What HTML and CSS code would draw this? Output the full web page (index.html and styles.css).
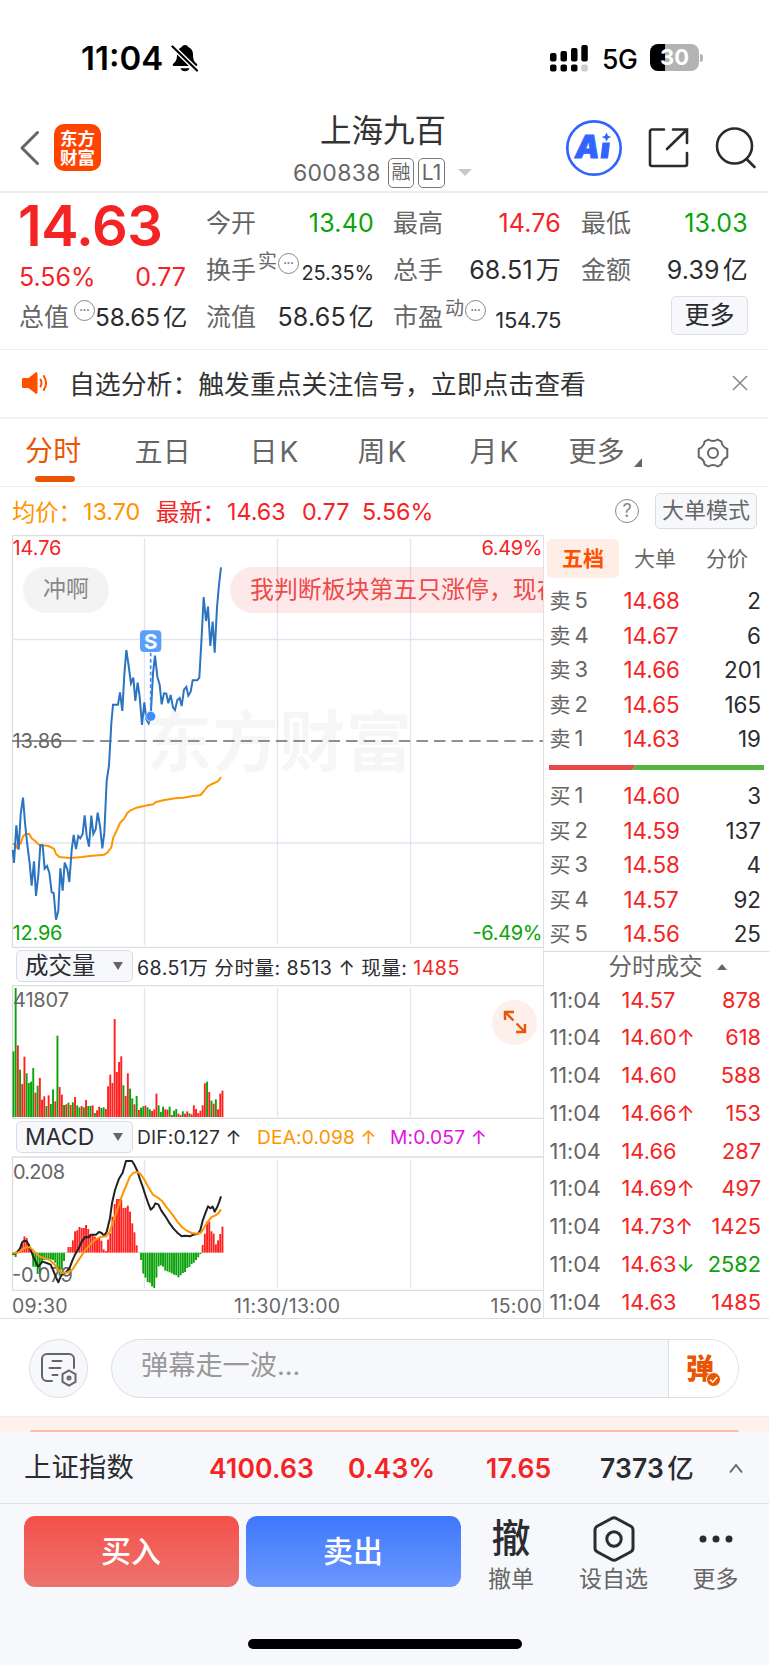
FILE: index.html
```html
<!DOCTYPE html>
<html lang="zh-CN">
<head>
<meta charset="utf-8">
<title>上海九百 600838</title>
<link rel="stylesheet" href="styles.css">
</head>
<body>
<div class="app">
  <div class="status">
    <span class="clock">11:04</span>
    <svg class="bell" width="28" height="28" viewBox="0 0 28 28"><path d="M14 1c-2 0-3 1-3.200 2C7.500 4.200 6 7 6 10.500c0 5-1 7-4 9.500-.6 1-.3 2 1 2h22c1.300 0 1.600-1 1-2-3-2.500-4-4.500-4-9.500C22 7 20.500 4.200 17.200 3 17 2 16 1 14 1z"/><path d="M9.500 24.200h9c-.5 2-2.300 3-4.500 3s-4-1-4.500-3z"/><path class="slash-gap" d="M1.500 2.500L26 26.500"/><path class="slash" d="M1.500 2.500L26 26.500"/></svg>
    <svg class="signal" width="40" height="28" viewBox="0 0 40 28"><rect x="1" y="9" width="6.500" height="8.500" rx="2"/><rect x="11.500" y="7" width="6.500" height="10.500" rx="2"/><rect x="22" y="4" width="6.500" height="13.500" rx="2"/><rect x="32.300" y="1" width="6.500" height="16.500" rx="2"/><rect x="1" y="20.500" width="6.500" height="7" rx="2"/><rect x="11.500" y="20.500" width="6.500" height="7" rx="2"/><rect x="22" y="20.500" width="6.500" height="7" rx="2"/><rect class="dim" x="32.300" y="20.500" width="6.500" height="7" rx="2"/></svg>
    <span class="net">5G</span>
    <span class="battery">30</span><i class="nub"></i>
  </div>

  <header class="header">
    <svg class="back" width="22" height="36" viewBox="0 0 22 36"><path d="M18.500 2.500L3 18l15.500 15.500"/></svg>
    <div class="logo"><span>东方</span><span>财富</span></div>
    <div class="title">
      <h1>上海九百</h1>
      <div class="code"><span class="num">600838</span><span class="tag">融</span><span class="tag l1">L1</span><i class="caret"></i></div>
    </div>
    <svg class="ai" width="58" height="58" viewBox="0 0 58 58"><circle cx="29" cy="29" r="26.700"/><text x="10" y="39">A</text><path d="M37.500 23.500h7.500l-2 16h-7.500z"/><path d="M41.500 13.500l1.500 3.200 3.200 1.300-3.200 1.400-1.500 3.200-1.500-3.200-3.200-1.400 3.200-1.300z"/></svg>
    <svg class="share" width="42" height="42" viewBox="0 0 42 42"><path d="M16 2.500H4a2 2 0 0 0-2 2V37a2 2 0 0 0 2 2h33a2 2 0 0 0 2-2V26M25 2.500h14V16M39 2.500L19 22"/></svg>
    <svg class="search" width="42" height="42" viewBox="0 0 42 42"><circle cx="19.500" cy="19" r="17.500"/><path d="M31.500 32l8 8"/></svg>
  </header>

  <section class="quote">
    <div class="qcol main">
      <div class="price">14.63</div>
      <div class="chg"><span>5.56%</span><span>0.77</span></div>
      <div class="cell r3"><label>总值</label><i class="dots">•••</i><b class="s25">58.65<em>亿</em></b></div>
    </div>
    <div class="qcol c2">
      <div class="cell"><label>今开</label><b class="down">13.40</b></div>
      <div class="cell"><label>换手</label><sup>实</sup><i class="dots">•••</i><b class="s21">25.35%</b></div>
      <div class="cell"><label>流值</label><b>58.65<em>亿</em></b></div>
    </div>
    <div class="qcol c3">
      <div class="cell"><label>最高</label><b class="up">14.76</b></div>
      <div class="cell"><label>总手</label><b>68.51<em>万</em></b></div>
      <div class="cell"><label>市盈</label><sup>动</sup><i class="dots">•••</i><b class="s22">154.75</b></div>
    </div>
    <div class="qcol c4">
      <div class="cell"><label>最低</label><b class="down">13.03</b></div>
      <div class="cell"><label>金额</label><b>9.39<em>亿</em></b></div>
      <div class="cell"><button class="more">更多</button></div>
    </div>
  </section>

  <section class="notice">
    <svg width="28" height="24" viewBox="0 0 28 24"><path class="f" d="M2.500 7h5L14.500 1.500c1-.7 2 0 2 1v19c0 1-1 1.700-2 1L7.500 17h-5C1.500 17 1 16.500 1 15.500v-7C1 7.500 1.500 7 2.500 7z"/><path class="s" d="M19.500 8.500q2 3.500 0 7M22.800 5q4.500 7 0 14"/></svg>
    <p>自选分析：触发重点关注信号，立即点击查看</p>
    <svg class="close" width="16" height="16" viewBox="0 0 16 16"><path d="M1 1l14 14M15 1L1 15"/></svg>
  </section>

  <nav class="tabs">
    <span class="on">分时</span><span>五日</span><span class="k">日K</span><span class="k">周K</span><span class="k">月K</span><span class="tmore">更多<i></i></span>
    <svg width="32" height="30" viewBox="0 0 32 30"><path d="M11.300 1.500Q16 4.500 20.700 1.500L24.500 3.700Q24.800 8.300 30.300 11V19Q24.800 21.700 24.500 26.300L20.700 28.500Q16 25.500 11.300 28.500L7.500 26.300Q7.200 21.700 1.700 19V11Q7.200 8.300 7.500 3.700Z"/><circle cx="16" cy="15" r="5"/></svg>
  </nav>

  <section class="legend">
    <span class="avg">均价：</span><span class="avg v1">13.70</span><span class="up">最新：</span><span class="up v2">14.63</span><span class="up v3">0.77</span><span class="up v4">5.56%</span>
    <span class="q">?</span><span class="mode">大单模式</span>
  </section>

  <main class="board">
    <div class="charts">
      <div class="pricewrap">
        <svg class="chart" width="544" height="413" viewBox="0 535 544 413">
          <g class="grid"><path d="M12.500 947.500V535.500H544M12.500 947.500H544"/><path class="b" d="M144.500 538V945M277.500 538V945M410.500 538V945M12 639.500H544M12 843H544"/></g>
          <text class="wm" x="146" y="766" textLength="266">东方财富</text>
          <path class="dash0" d="M12 741H65"/><path class="dash" d="M65 741H543"/>
          <text class="ax g" x="12.500" y="748" textLength="50">13.86</text>
          <text class="ax r" x="12.500" y="554.500" textLength="49">14.76</text>
          <text class="ax n" x="12.500" y="940" textLength="50">12.96</text>
          <text class="ax r e" x="542.500" y="554.500" textLength="61">6.49%</text>
          <text class="ax n e" x="542.500" y="940" textLength="70">-6.49%</text>
          <g transform="translate(0 530) scale(.33333)">
            <path class="lavg" d="M38 942L46 941 52 955 57 943 62 941 69 919 77 912 88 912 95 925 106 934 117 944 145 948 162 956 168 972 178 981 210 984 245 981 270 978 313 974 322 968 334 952 340 922 350 902 360 879 373 865 382 849 392 841 410 833 435 827 460 823 468 816 490 811 525 805 550 803 575 799 602 795 612 783 623 769 636 762 652 755 658 749 663 741"/>
            <path class="lprice" d="M38 960L42 999 49 886 56 959 62 853 69 803 75 878 82 945 89 1000 95 1067 102 994 108 1098 115 1035 121 946 128 946 134 1016 141 1008 148 1028 155 1087 161 1089 168 1169 175 1142 181 1015 188 1082 194 998 202 1018 208 1056 215 960 221 915 228 957 235 918 241 925 248 912 254 856 260 917 267 950 274 857 280 912 287 898 293 848 300 888 307 955 313 908 320 753 327 706 334 580 339 524 354 524 360 487 367 543 373 433 379 360 386 408 393 460 400 443 406 513 413 458 419 500 426 585 433 517 439 568 446 580 452 562 459 430 465 377 472 440 479 464 485 523 492 490 499 491 505 520 512 495 519 532 525 540 532 510 539 504 545 528 552 479 559 471 565 497 572 485 578 451 592 451 598 443 605 320 611 201 618 273 624 230 631 348 638 275 644 368 651 232 657 165 663 112"/>
            <path class="mk" d="M452 368V548"/><circle cx="452" cy="559" r="15"/><rect x="420" y="301" width="64" height="65" rx="12"/><text class="s" x="452" y="357">S</text>
          </g>
        </svg>
        <div class="bullet b1">冲啊</div>
        <div class="bclip"><div class="bullet b2">我判断板块第五只涨停，现在</div></div>
      </div>
      <div class="info i1"><span class="sel">成交量<i></i></span><span class="t1">68.51万 分时量: 8513 ↑ 现量: <b>1485</b></span></div>
      <div class="volwrap">
        <svg class="chart" width="544" height="134" viewBox="0 985 544 134">
          <g class="grid"><path d="M12.500 1118V985.500H544M12 1118.500H544"/><path class="b" d="M144.500 988V1117M277.500 988V1117M410.500 988V1117"/></g>
          <g id="vol" transform="translate(0 940) scale(.33333)"></g>
          <text class="ax g" x="13" y="1007" textLength="56">41807</text>
        </svg>
        <div class="expand"><svg width="24" height="24" viewBox="0 0 24 24"><path d="M2 10V2h9M2.500 2.500l8 8M22 14v8h-9M21.500 21.500l-8-8"/></svg></div>
      </div>
      <div class="info i2"><span class="sel">MACD<i></i></span><span class="dif">DIF:0.127 ↑</span><span class="dea">DEA:0.098 ↑</span><span class="mm">M:0.057 ↑</span></div>
      <svg class="chart" width="544" height="135" viewBox="0 1156 544 135">
        <g class="grid"><path d="M12.500 1290V1157H544M12 1290.500H544"/><path class="b" d="M144.500 1160V1288M277.500 1160V1288M410.500 1160V1288"/></g>
        <g id="macd" transform="translate(0 1120) scale(.33333)"></g>
        <text class="ax g" x="13" y="1178.500" textLength="52">0.208</text>
        <text class="ax g" x="12" y="1282" textLength="61">-0.079</text>
        <g transform="translate(0 1120) scale(.33333)">
          <path class="lblack" d="M38 403L52 396 60 386 66 368 72 362 80 364 86 374 94 394 100 411 107 425 114 440 121 433 127 425 140 429 152 434 160 452 168 472 175 487 182 470 188 461 196 458 208 446 217 422 224 406 236 385 246 363 256 351 266 352 272 344 288 344 297 336 305 339 312 347 320 336 330 294 336 250 345 210 357 176 368 158 378 123 396 123 404 136 412 153 420 178 428 200 436 225 444 248 452 269 460 262 466 250 475 253 484 272 496 289 507 307 520 325 532 338 545 349 555 347 570 349 580 344 594 341 601 330 608 302 616 280 624 259 631 265 638 260 644 275 652 260 658 245 663 229"/>
          <path class="lavg" d="M38 400L56 397 66 389 76 382 90 382 100 392 120 410 150 420 164 434 176 452 188 459 205 457 217 449 233 424 250 399 265 379 283 361 300 351 318 349 328 337 340 303 352 268 365 230 378 198 390 169 401 158 410 156 420 160 432 177 445 201 458 223 475 234 487 244 500 262 517 283 532 305 546 321 560 332 575 339 592 341 603 338 614 320 626 302 635 291 645 287 655 280 663 268"/>
        </g>
      </svg>
      <div class="times"><span>09:30</span><span>11:30/13:00</span><span>15:00</span></div>
    </div>
    <aside class="depth">
      <div class="dtabs"><span class="on">五档</span><span>大单</span><span>分价</span></div>
      <div id="asks" class="levels"></div>
      <svg class="ratio" width="215" height="5" viewBox="0 0 215 5"><path fill="#e84848" d="M0 0H87l-4 5H0z"/><path fill="#55b53e" d="M87 0H215V5H83z"/></svg>
      <div id="bids" class="levels"></div>
      <div class="ttl">分时成交<i></i></div>
      <div id="trades"></div>
    </aside>
  </main>

  <section class="comment">
    <div class="round"><svg width="38" height="36" viewBox="0 0 38 36"><path d="M12 29H7a5 5 0 0 1-5-5V7a5 5 0 0 1 5-5h22a5 5 0 0 1 5 5v9M12.500 9h9M9.500 16h11M12.500 23h5"/><path d="M29 18.500l6.500 3.700v7.600L29 33.500l-6.500-3.700v-7.600z"/><circle cx="29" cy="26" r="1.500"/></svg></div>
    <div class="field"><span>弹幕走一波...</span><div class="dan"><b>弹</b><svg width="15" height="15" viewBox="0 0 15 15"><circle cx="7.500" cy="7.500" r="7"/><path d="M4 7.500l2.700 2.700 4.500-5"/></svg></div></div>
  </section>
  <div class="peach"><i></i></div>

  <footer class="foot">
    <div class="index"><span class="nm">上证指数</span><span class="up x1">4100.63</span><span class="up x2">0.43%</span><span class="up x3">17.65</span><span class="x4">7373<em>亿</em></span><svg width="16" height="12" viewBox="0 0 16 12"><path d="M2 10.500L8 3l6 7.500"/></svg></div>
    <div class="actions">
      <button class="buy">买入</button><button class="sell">卖出</button>
      <div class="act a1"><b>撤</b><span>撤单</span></div>
      <div class="act a2"><svg width="44" height="46" viewBox="0 0 44 46"><path d="M19.500 2.500q2.500-1.400 5 0L38.500 10q2.500 1.300 2.500 4v18q0 2.700-2.500 4L24.500 43.500q-2.500 1.400-5 0L5.500 36Q3 34.700 3 32V14q0-2.700 2.500-4z"/><circle cx="22" cy="23" r="7.200"/></svg><span>设自选</span></div>
      <div class="act a3"><svg width="36" height="46" viewBox="0 0 36 46"><circle cx="5" cy="23" r="3.500"/><circle cx="18" cy="23" r="3.500"/><circle cx="31" cy="23" r="3.500"/></svg><span>更多</span></div>
    </div>
    <div class="home"></div>
  </footer>
</div>
<script src="script.js"></script>
</body>
</html>
```
FILE: styles.css
```css
* { box-sizing: border-box; }
body { margin: 0; background: #fff; font-family: Inter, "Noto Sans CJK SC", sans-serif; color: #2b2c30; }
svg { display: block; flex: none; fill: none; }
em, i { font-style: normal; }
button { font-family: inherit; border: 0; padding: 0; }
.app { width: 769px; height: 1665px; overflow: hidden; display: flex; flex-direction: column; }
.app > * { flex: none; }
.up { color: #f52424; }
.down { color: #0ba30b; }

.status { height: 100px; padding: 15px 0 0 81px; display: flex; align-items: center; color: #000; }
.clock { width: 90px; font-size: 33px; font-weight: 600; letter-spacing: 0; }
.bell { fill: #000; }
.slash-gap { stroke: #fff; stroke-width: 5; }
.slash { stroke: #000; stroke-width: 2.200; stroke-linecap: round; }
.signal { margin-left: 350px; fill: #000; }
.signal .dim { fill: #ccc; }
.net { width: 49px; padding-left: 13px; font-size: 26.500px; font-weight: 500; letter-spacing: -.5px; line-height: 28px; padding-top: 3px; }
.battery { margin-left: 12px; width: 49px; height: 27px; border-radius: 8px; background: linear-gradient(90deg, #000 15px, #b3b3b3 15px); color: #fff; font-size: 22px; font-weight: 700; text-align: center; line-height: 27px; }
.nub { width: 3px; height: 8px; margin-left: 1px; background: #b3b3b3; border-radius: 0 3px 3px 0; }

.header { height: 93px; border-bottom: 2px solid #ececec; display: flex; align-items: flex-start; }
.back { margin: 30px 0 0 19px; stroke: #666; stroke-width: 3; stroke-linecap: round; stroke-linejoin: round; }
.logo { width: 47px; height: 47px; margin: 24px 0 0 13px; background: #ff4400; border-radius: 10px; color: #fff; display: flex; flex-direction: column; align-items: center; justify-content: center; font-size: 17.500px; font-weight: 700; line-height: 19px; }
.title { width: 190px; margin: 8px 0 0 191px; display: flex; flex-direction: column; }
.title h1 { margin: 0 0 0 28px; font-size: 31.500px; font-weight: 400; line-height: 46px; color: #333; }
.code { display: flex; align-items: center; height: 37px; margin-left: 1px; color: #666; }
.code .num { width: 95px; font-size: 23px; letter-spacing: .3px; white-space: nowrap; }
.tag { width: 26px; height: 30px; border: 1.500px solid #777; border-radius: 5px; font-size: 19px; line-height: 27px; text-align: center; margin-right: 4px; }
.tag.l1 { width: 27px; font-size: 21px; }
.caret { margin-left: 9px; border: 7px solid transparent; border-top: 7px solid #c8c8c8; border-bottom: 0; }
.ai { margin: 19px 0 0 83px; }
.ai circle { stroke: #3264ff; stroke-width: 2.700; }
.ai path, .ai text { fill: #3264ff; }
.ai text { font: italic 900 31px Inter, sans-serif; stroke: #3264ff; stroke-width: .8; }
.share { margin: 27px 0 0 25px; stroke: #2b2b2b; stroke-width: 2.600; stroke-linecap: round; }
.search { margin: 27px 0 0 25px; stroke: #2b2b2b; stroke-width: 2.600; stroke-linecap: round; }

.quote { height: 157px; border-bottom: 1px solid #efefef; display: grid; grid-template-columns: 167px 168px 167px 167px; column-gap: 20px; padding-left: 19px; }
.qcol { padding-top: 6px; }
.qcol.c3 { margin-left: -1px; margin-right: 0; }
.price { height: 55px; margin-left: -1px; font-size: 56px; font-weight: 600; line-height: 55px; color: #f52424; letter-spacing: -.5px; }
.chg { height: 39px; display: flex; justify-content: space-between; color: #f52424; font-size: 25px; line-height: 42px; padding-top: 2px; }
.cell { height: 47px; display: flex; align-items: center; color: #666; font-size: 25px; white-space: nowrap; line-height: 46px; padding-top: 1px; }
.cell b { font-weight: 400; margin-left: auto; color: #2b2c30; font-size: 25px; letter-spacing: .2px; }
.cell b em { margin-left: 3px; }
.cell b.up { color: #f52424; }
.cell b.down { color: #0ba30b; }
.cell .s25 { font-size: 24.300px; letter-spacing: -.1px; }
.cell .s21 { font-size: 20px; padding-top: 5px; letter-spacing: -.1px; }
.cell .s22 { font-size: 22px; padding-top: 5px; letter-spacing: -.3px; }
.cell sup { font-size: 19px; line-height: 20px; margin: -17px 0 0 2px; }
.dots { width: 21px; height: 21px; border: 1.500px solid #888; border-radius: 50%; font-size: 6px; line-height: 18px; text-align: center; margin: -13px 0 0 1px; flex: none; }
.r3 .dots { margin-left: 5px; }
.r3 b { margin-left: 0; }
.cell.r3 { justify-content: space-between; }
.more { width: 79px; height: 39px; margin: -3px 0 0 90px; background: #f7f8fb; border: 1.500px solid #dddfe6; border-radius: 5px; font-size: 25px; line-height: 35px; color: #2b2c30; }

.notice { height: 69px; border-bottom: 2px solid #f3f3f4; display: flex; align-items: center; padding: 0 0 2px 21px; }
.notice .f { fill: #ff5000; }
.notice .s { stroke: #ff5000; stroke-width: 2; stroke-linecap: round; }
.notice p { margin: 0 0 0 20px; width: 663px; font-size: 25.850px; color: #333; white-space: nowrap; }
.notice .close { margin: 1px 0 0; stroke: #888; stroke-width: 1.500; }

.tabs { height: 68px; border-bottom: 1.500px solid #ececee; display: grid; grid-template-columns: 109.500px 115px 108px 112px 99px 128px 32px; padding-left: 25px; align-items: center; color: #666; font-size: 28px; line-height: 65px; }
.tabs { letter-spacing: .3px; }
.tabs .k { letter-spacing: 2px; }
.tabs .on { color: #ea5504; height: 67px; display: flex; flex-direction: column; }
.tabs .on::after { content: ""; width: 40px; height: 6px; border-radius: 3px; background: #ea5504; margin: -8px 0 0 10px; }
.tabs svg { stroke: #666; stroke-width: 2; stroke-linejoin: round; }
.tmore i { display: inline-block; margin-left: 9px; border-left: 8px solid transparent; border-bottom: 9px solid #666; margin-bottom: -5px; }

.legend { height: 48px; display: flex; align-items: center; padding: 0 0 0 12px; font-size: 23.300px; color: #f52424; white-space: nowrap; }
.legend .avg { color: #ff9500; }
.legend span:nth-child(1), .legend span:nth-child(3) { width: 71px; }
.legend .v1 { width: 73px; } .legend .v2 { width: 75px; } .legend .v3 { width: 60px; } .legend .v4 { width: 72px; }
.legend .q { width: 24px; height: 24px; margin-left: 181px; border: 1.500px solid #888; border-radius: 50%; color: #888; font-size: 18px; line-height: 22px; text-align: center; }
.mode { width: 102px; height: 36px; margin-left: 16px; background: #f7f8fb; border: 1.500px solid #d9dbe6; border-radius: 5px; color: #666; font-size: 22px; line-height: 32px; text-align: center; }

.board { height: 784px; border-bottom: 1.500px solid #dfe0e4; display: grid; grid-template-columns: 544px 225px; grid-template-rows: 783px; }
.charts { border-right: 1.500px solid #dfe0e4; width: 544px; }
.grid path { stroke: #dcdde3; stroke-width: 1.300; }
.grid .b { stroke: #e2e5ef; }
.pricewrap, .volwrap { position: relative; }
.wm { font-size: 66px; font-weight: 700; fill: #000; fill-opacity: .035; }
.dash, .dash0 { stroke: #6b6b6b; stroke-width: 1.500; }
.dash { stroke-dasharray: 11.500 6.070; }
.ax { font-size: 20px; }
.ax.g { fill: #666; } .ax.r { fill: #f52424; } .ax.n { fill: #0ba30b; }
.ax.e { text-anchor: end; }
.lavg { stroke: #ff9500; stroke-width: 6; stroke-linejoin: round; }
.lprice { stroke: #2c74c0; stroke-width: 6; }
.lblack { stroke: #222; stroke-width: 6; stroke-linejoin: round; }
.mk { stroke: #3d8bff; stroke-width: 5; stroke-dasharray: 11 8; }
.pricewrap circle { fill: #3d8bff; stroke: #fff; stroke-width: 2; }
.pricewrap rect { fill: #5a9ffb; }
.pricewrap .s { font-size: 62px; font-weight: 700; fill: #fff; text-anchor: middle; }
.bullet { position: absolute; height: 46px; border-radius: 23px; line-height: 45px; white-space: nowrap; }
.b1 { left: 23px; top: 32px; width: 86px; background: #f3f3f3; color: #888; font-size: 23px; text-align: center; }
.bclip { position: absolute; left: 230px; top: 32px; width: 313px; height: 46px; overflow: hidden; }
.b2 { left: 0; top: 0; width: 350px; padding-left: 20px; font-size: 23.900px; background: rgba(240, 70, 70, .12); color: #ee4a4a; }
.info { display: flex; align-items: center; padding: 0 0 1px 16px; font-size: 19.200px; white-space: nowrap; }
.i1 { height: 37px; } .i2 { height: 37px; }
.sel { width: 117px; height: 32px; margin-right: 4px; flex: none; background: #f7f8fb; border: 1.500px solid #d9dbe6; border-radius: 5px; padding: 0 9px 0 8px; display: flex; align-items: center; justify-content: space-between; font-size: 23.500px; line-height: 28px; }
.i2 .sel { font-size: 23px; }
.sel i { border: 5px solid transparent; border-top: 8px solid #666; border-bottom: 0; }
.t1 b { font-weight: 400; color: #f52424; }
.t1 { font-size: 19.600px; letter-spacing: .45px; }
.dif { width: 120px; } .dea { width: 133px; color: #ff9500; } .mm { color: #e312e3; }
.dif, .dea, .mm { letter-spacing: .15px; }
.expand { position: absolute; left: 492px; top: 14.500px; width: 45px; height: 45px; border-radius: 50%; background: #fdf0ea; display: flex; align-items: center; justify-content: center; }
.expand svg { stroke: #ea5504; stroke-width: 2.400; }
.times { height: 28px; display: grid; grid-template-columns: 222px 150px 1fr; padding: 1px 1px 0 12px; color: #666; font-size: 19.500px; line-height: 28px; letter-spacing: .3px; }
.times span:last-child { text-align: right; }

.depth { padding-right: 8px; }
.dtabs { height: 47px; padding: 4px 0 0 3px; display: grid; grid-template-columns: 72px 87px 60px; font-size: 21px; line-height: 39px; color: #666; }
.dtabs span { text-align: left; padding-left: 15px; }
.dtabs .on { height: 39px; background: #ffeee6; color: #ff5000; font-weight: 700; border-radius: 5px; padding: 0; text-align: center; }
.dtabs span:last-child { padding-left: 0; }
.row { display: grid; grid-template-columns: 74px 66px 1fr; padding-left: 5.500px; height: 34.600px; line-height: 35px; font-size: 22.400px; white-space: nowrap; }
.row .k { color: #666; font-size: 21px; }
.row .k em { margin-left: 4px; font-size: 22px; }
.row .q { text-align: right; }
.levels { height: 173px; padding-top: 1px; }
#bids { padding-top: 0; }
.ratio { margin: 10px 0 8px 4.500px; }
.ttl { height: 32px; margin: -.5px -8px 0 0; border-top: 1.500px solid #d9dade; font-size: 23.500px; line-height: 30px; color: #666; padding-left: 64.500px; }
.ttl i { display: inline-block; margin-left: 14px; border: 5px solid transparent; border-bottom: 6px solid #666; border-top: 0; vertical-align: 5px; }
#trades { margin-top: -1px; }
#trades .row { height: 37.750px; line-height: 37.750px; font-size: 21.800px; grid-template-columns: 72px 76px 1fr; }
#trades .row .k { font-size: 21.800px; letter-spacing: -.1px; }

.comment { height: 97px; display: flex; padding: 20px 0 0 29px; }
.round { width: 59px; height: 59px; border: 1.500px solid #dcdee6; border-radius: 50%; background: #f7f8fb; display: flex; align-items: center; justify-content: center; }
.round svg { stroke: #666; stroke-width: 2; stroke-linecap: round; margin-top: 2px; }
.field { width: 628px; height: 59px; margin-left: 23px; border: 1.500px solid #dcdee6; border-radius: 30px; background: #f7f8fb; overflow: hidden; display: flex; justify-content: space-between; font-size: 27.200px; line-height: 51px; color: #999; padding-left: 29px; }
.dan { width: 70px; background: #fff; border-left: 1.500px solid #dcdee6; display: flex; align-items: center; padding-left: 17px; color: #ea5504; }
.dan b { font-size: 28px; font-weight: 900; line-height: 50px; }
.dan svg { margin: 22px 0 0 -8px; }
.dan circle { fill: #ea5504; stroke: #fff; stroke-width: 1; }
.dan path { stroke: #fff; stroke-width: 1.600; }
.peach { height: 16px; border-top: 1px solid #eee; background: #fff2ed; padding: 13px 30px 0; }
.peach i { display: block; height: 2px; background: #ffbcac; border-radius: 4px 4px 0 0; }

.foot { height: 233px; background: #f7f8fb; }
.index { height: 72px; border-bottom: 1.500px solid #e0e1e5; display: grid; grid-template-columns: 185px 139px 138px 114px 128px 16px; align-items: center; padding-left: 24px; font-size: 26.500px; font-weight: 600; line-height: 70px; letter-spacing: .2px; }
.index .nm { font-weight: 400; font-size: 27.300px; }
.index em { font-weight: 500; margin-left: 3px; }
.index svg { stroke: #666; stroke-width: 2; }
.actions { display: flex; padding: 12px 0 0 23.500px; height: 135px; }
.actions button { width: 215px; height: 71px; border-radius: 11px; color: #fff; font-size: 30px; font-weight: 500; line-height: 69px; }
.buy { background: linear-gradient(#f5504a, #ed736e); }
.sell { margin-left: 7px; background: linear-gradient(#3d78fb, #6c98ff); }
.act { display: flex; flex-direction: column; align-items: center; color: #666; font-size: 23px; white-space: nowrap; }
.act b { height: 46px; line-height: 43px; font-size: 39px; font-weight: 500; color: #2b2c30; }
.act span { line-height: 35px; }
.a1 { width: 46px; margin-left: 27.500px; }
.a2 { width: 70px; margin-left: 44.500px; }
.a2 svg { stroke: #2b2c30; stroke-width: 3; }
.a3 { width: 46px; margin-left: 44px; }
.a3 svg { fill: #2b2c30; }
.home { width: 274px; height: 10px; margin-left: 248px; border-radius: 5px; background: #000; }
```
FILE: script.js
```js
const NS = 'http://www.w3.org/2000/svg';
const PITCH = 6.6;

function bar(parent, i, top, bottom, fill) {
  const r = document.createElementNS(NS, 'rect');
  r.setAttribute('x', (37.5 + PITCH * i).toFixed(1));
  r.setAttribute('width', 5.7);
  r.setAttribute('y', top);
  r.setAttribute('height', Math.max(1, bottom - top));
  r.setAttribute('fill', fill);
  parent.appendChild(r);
}

const RED = '#ff2020', GREEN = '#0ba30b';
const volume = 'g334 g144 r316 g389 r432 r350 g400 g429 g425 g384 r458 g437 r414 r479 r469 g498 r466 g492 g448 r484 g287 r441 r464 g495 r493 g488 r495 g487 r471 g496 g502 r498 g502 r480 g498 g498 r496 g519 r511 r500 g504 g502 r507 r439 r404 r429 r237 r396 r366 r349 g436 r468 r400 g446 g475 r493 g468 r510 g503 g499 r497 g502 g508 r513 r508 r461 g496 g516 g500 r508 r509 g500 r525 g512 g507 r521 r525 g514 r521 r514 g520 r523 r496 r507 r519 r512 r496 r430 g425 r456 g482 r491 g478 r508 r461 r452'.split(' ');
const vol = document.getElementById('vol');
volume.forEach((v, i) => bar(vol, i, +v.slice(1), 531, v[0] === 'r' ? RED : GREEN));

const ZERO = 398;
const hist = [405, 411, 395, 390, 370, 349, 354, 372, 390, 440, 441, 462, 462, 425, 420, 418, 418, 418, 420, 428, 452, 467, 449, 423, 399, 381, 381, 361, 334, 331, 321, 324, 324, 315, 327, 346, 342, 350, 355, 353, 362, 388, 393, 359, 340, 290, 252, 237, 237, 239, 264, 263, 257, 275, 310, 337, 376, 397, 420, 461, 473, 486, 488, 499, 504, 473, 439, 436, 440, 452, 454, 457, 460, 464, 466, 472, 466, 459, 456, 444, 441, 432, 428, 420, 412, 402, 375, 341, 305, 305, 334, 341, 373, 361, 342, 320];
const macd = document.getElementById('macd');
hist.forEach((v, i) => bar(macd, i, Math.min(v, ZERO), Math.max(v, ZERO), v < ZERO ? RED : GREEN));

function row(target, label, price, qty, tone) {
  document.getElementById(target).insertAdjacentHTML('beforeend',
    `<div class="row"><span class="k">${label}</span><span class="up">${price}</span><span class="q ${tone}">${qty}</span></div>`);
}
[[5, '14.68', 2], [4, '14.67', 6], [3, '14.66', 201], [2, '14.65', 165], [1, '14.63', 19]]
  .forEach(([n, p, q]) => row('asks', `卖<em>${n}</em>`, p, q, ''));
[[1, '14.60', 3], [2, '14.59', 137], [3, '14.58', 4], [4, '14.57', 92], [5, '14.56', 25]]
  .forEach(([n, p, q]) => row('bids', `买<em>${n}</em>`, p, q, ''));
[['14.57', 878], ['14.60↑', 618], ['14.60', 588], ['14.66↑', 153], ['14.66', 287], ['14.69↑', 497], ['14.73↑', 1425], ['14.63<span class="down">↓</span>', 2582, 'down'], ['14.63', 1485]]
  .forEach(([p, q, t]) => row('trades', '11:04', p, q, t || 'up'));
```
